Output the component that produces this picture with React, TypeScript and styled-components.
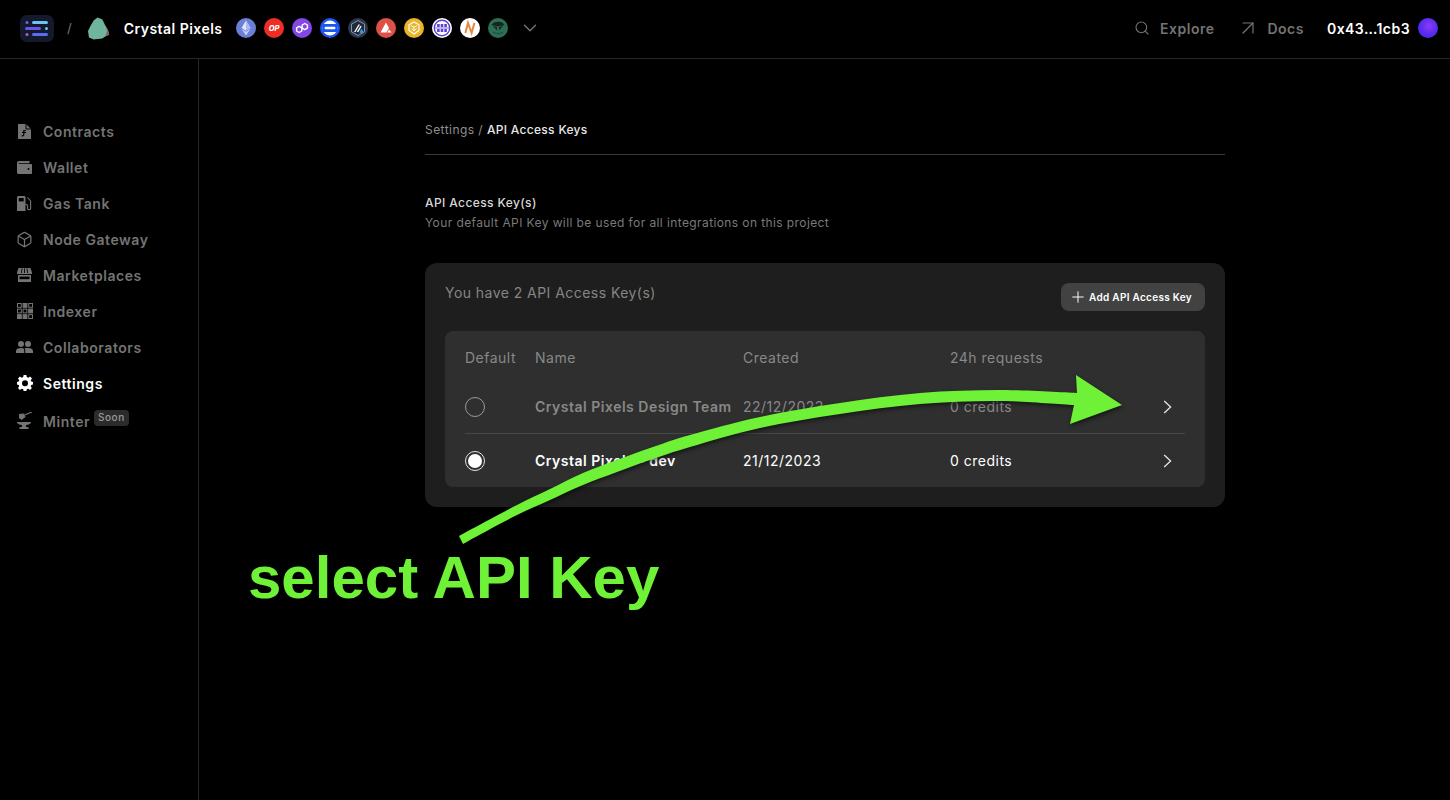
import React from "react";
import styled, { createGlobalStyle } from "styled-components";
import { ChevronDown, Search, ArrowUpRight, Plus, Box } from "lucide-react";

const GlobalStyle = createGlobalStyle`
  html, body {
    margin: 0;
    padding: 0;
    background: #000;
    font-family: Inter, "Liberation Sans", sans-serif;
    overflow: hidden;
  }
`;

const Page = styled.div`
  position: relative;
  width: 1450px;
  height: 800px;
  display: flex;
  flex-direction: column;
  background: #000;
  color: #fff;
`;

const Header = styled.header`
  height: 56px;
  flex: none;
  display: flex;
  align-items: center;
  padding: 0 12px 2px 20px;
  border-bottom: 1px solid #262626;
`;

const Logo = styled.div`
  width: 34px;
  height: 27px;
  border-radius: 7px;
  background: #141a2b;
  display: flex;
  align-items: center;
  justify-content: center;
`;

const Slash = styled.span`
  margin: 0 16px 0 13px;
  font-size: 13px;
  color: #777;
`;

const ProjectName = styled.span`
  margin: 0 13px 0 15px;
  font-size: 14px;
  font-weight: 600;
  letter-spacing: 0.47px;
`;

const Chains = styled.div`
  display: flex;
  gap: 8px;
  margin-right: 11px;
`;

const HeaderLink = styled.a<{ $gap: number }>`
  display: flex;
  align-items: center;
  gap: ${(p) => p.$gap}px;
  font-size: 14px;
  font-weight: 600;
  letter-spacing: 0.5px;
  color: #747474;
`;

const HeaderRight = styled.div`
  margin-left: auto;
  display: flex;
  align-items: center;
  gap: 22px;
`;

const Address = styled.div`
  display: flex;
  align-items: center;
  gap: 8px;
  margin-left: 1px;
  font-size: 14px;
  font-weight: 600;
  letter-spacing: 0.45px;
`;

const Avatar = styled.div`
  width: 20px;
  height: 20px;
  border-radius: 50%;
  background: radial-gradient(circle at 55% 40%, #8a3cf5 0%, #5b2bf0 50%, #3a2be0 100%);
`;

const Body = styled.div`
  flex: 1;
  display: flex;
  min-height: 0;
`;

const Sidebar = styled.nav`
  width: 199px;
  flex: none;
  box-sizing: border-box;
  padding: 54px 0 0 16px;
  border-right: 1px solid #262626;
`;

const NavItem = styled.a<{ $active?: boolean; $soon?: boolean }>`
  height: 36px;
  box-sizing: border-box;
  padding-top: ${(p) => (p.$soon ? "4px" : "0")};
  display: flex;
  align-items: center;
  gap: 10px;
  font-size: 14px;
  font-weight: 600;
  letter-spacing: 0.55px;
  color: ${(p) => (p.$active ? "#fff" : "#747474")};
`;

const NavIcon = styled.span<{ $lift?: boolean }>`
  width: 17px;
  height: 17px;
  flex: none;
  display: flex;
  align-items: center;
  justify-content: center;
  margin-top: ${(p) => (p.$lift ? "-2px" : "0")};
`;

const SoonBadge = styled.span`
  align-self: flex-start;
  margin: 5px 0 0 -6px;
  padding: 0 4px;
  height: 16px;
  line-height: 15px;
  border-radius: 4px;
  background: #2b2b2b;
  color: #999;
  font-size: 10px;
  font-weight: 500;
  letter-spacing: 0.5px;
`;

const Main = styled.main`
  flex: 1;
  display: flex;
  justify-content: center;
  padding-left: 1px;
`;

const Content = styled.div`
  width: 800px;
  padding-top: 63px;
`;

const Breadcrumb = styled.div`
  height: 32px;
  border-bottom: 1px solid #3a3a3a;
  font-size: 12px;
  letter-spacing: 0.45px;
  line-height: 16px;
  color: #8f8f8f;
  span {
    color: #e8e8e8;
    font-weight: 500;
    letter-spacing: 0.3px;
  }
`;

const SectionTitle = styled.h2`
  margin: 40px 0 0;
  font-size: 12px;
  line-height: 16px;
  font-weight: 500;
  letter-spacing: 0.4px;
  color: #d8d8d8;
`;

const SectionText = styled.p`
  margin: 4px 0 0;
  font-size: 12px;
  line-height: 16px;
  letter-spacing: 0.4px;
  color: #7a7a7a;
`;

const Card = styled.section`
  margin-top: 32px;
  padding: 20px;
  border-radius: 12px;
  background: #1e1e1e;
`;

const CardTop = styled.div`
  display: flex;
  justify-content: space-between;
  align-items: flex-start;
  height: 48px;
`;

const CardTitle = styled.div`
  font-size: 14px;
  line-height: 20px;
  letter-spacing: 0.45px;
  color: #858585;
`;

const AddButton = styled.button`
  width: 144px;
  height: 28px;
  padding: 0 0 0 8px;
  border: 0;
  border-radius: 8px;
  background: #424242;
  color: #fff;
  display: flex;
  align-items: center;
  gap: 2px;
  font-family: inherit;
  font-size: 10px;
  font-weight: 600;
  letter-spacing: 0.3px;
`;

const Panel = styled.div`
  border-radius: 8px;
  background: #2f2f2f;
  padding: 0 20px;
`;

const Row = styled.div<{ $head?: boolean; $dim?: boolean; $line?: boolean }>`
  display: grid;
  grid-template-columns: 70px 208px 207px 1fr 36px;
  align-items: center;
  height: ${(p) => (p.$head ? "49px" : p.$line ? "54px" : "53px")};
  box-sizing: border-box;
  padding-top: ${(p) => (p.$head ? "3px" : "0")};
  font-size: 14px;
  letter-spacing: 0.5px;
  color: ${(p) => (p.$head || p.$dim ? "#888" : "#fff")};
  border-bottom: ${(p) => (p.$line ? "1px solid #464646" : "0")};
`;

const NameCell = styled.div`
  font-weight: 600;
  white-space: nowrap;
`;

const Radio = styled.div<{ $on?: boolean }>`
  width: 20px;
  height: 20px;
  box-sizing: border-box;
  border-radius: 50%;
  border: 1px solid ${(p) => (p.$on ? "#e4e4e4" : "#9a9a9a")};
  padding: 2px;
  &::after {
    content: "";
    display: ${(p) => (p.$on ? "block" : "none")};
    width: 14px;
    height: 14px;
    border-radius: 50%;
    background: #fff;
  }
`;

const ChevronCell = styled.div`
  display: flex;
  justify-content: flex-end;
  padding-right: 13px;
`;

const Annotation = styled.svg`
  position: absolute;
  left: 0;
  top: 0;
  width: 1450px;
  height: 800px;
  pointer-events: none;
  filter: drop-shadow(1px 2px 2px rgba(0, 0, 0, 0.55));
`;

const AnnotationText = styled.div`
  position: absolute;
  left: 248px;
  top: 544px;
  font-family: "Liberation Sans", Arial, sans-serif;
  font-weight: 700;
  font-size: 60px;
  line-height: 68px;
  color: #6ef136;
  white-space: nowrap;
`;

const Chain = ({ bg, children }: { bg: string; children?: React.ReactNode }) => (
  <svg width="20" height="20" viewBox="0 0 20 20">
    <circle cx="10" cy="10" r="10" fill={bg} />
    {children}
  </svg>
);

const RowChevron = () => (
  <svg width="9" height="14" viewBox="0 0 9 14">
    <path d="M1.2 1 7.6 7 1.2 13" fill="none" stroke="#e6e6e6" strokeWidth="1.3" />
  </svg>
);

const chains = [
  <Chain bg="#6b7fd6" key="eth">
    <path d="M10 2.5 5.5 10 10 12.7 14.5 10Z" fill="#dfe5fb" />
    <path d="M5.5 11 10 17.5 14.5 11 10 13.7Z" fill="#c6d0f7" />
    <path d="M10 2.5V12.7L14.5 10Z" fill="#a9b8f3" />
  </Chain>,
  <Chain bg="#ee2d24" key="op">
    <text x="10" y="12.6" textAnchor="middle" fontSize="7.5" fontWeight="800" fontStyle="italic" fontFamily="Inter" fill="#fff">
      OP
    </text>
  </Chain>,
  <Chain bg="#8247e5" key="polygon">
    <path d="M7.2 8.4 9.8 9.9V13L7.2 14.5 4.6 13V9.9Z M12.8 5.5 15.4 7V10.1L12.8 11.6 10.2 10.1V7Z" fill="none" stroke="#fff" strokeWidth="1.4" strokeLinejoin="round" />
  </Chain>,
  <Chain bg="#1a57f0" key="base">
    <circle cx="10" cy="10" r="7.4" fill="#fff" />
    <rect x="2.6" y="6" width="14.8" height="8" fill="#1a57f0" />
    <rect x="4.6" y="8.7" width="10.8" height="2.6" rx="1" fill="#fff" />
  </Chain>,
  <Chain bg="#2c374b" key="arb">
    <path d="M10 2.5 16.5 6.2V13.8L10 17.5 3.5 13.8V6.2Z" fill="#1f2a3c" stroke="#9dadc0" strokeWidth=".8" />
    <path d="M6 14 10.5 6.5H12L7.5 14Z" fill="#fff" />
    <path d="M8.8 14 12.6 7.7 13.6 8.4 10.3 14Z" fill="#fff" />
    <path d="M11.5 14.5 13.4 10.8 15.5 13.6 13.6 15.2Z" fill="#28a0f0" />
  </Chain>,
  <Chain bg="#de5148" key="avax">
    <path d="M9.9 4.4 13 9.9 10.4 14.6H4.6Z" fill="#fff" />
    <path d="M13 11.6 15.6 14.6H11.2Z" fill="#fff" />
  </Chain>,
  <Chain bg="#e8b52c" key="bnb">
    <path d="M10 4 15 6.8V12.5L10 16 5 12.5V6.8Z" fill="none" stroke="#fff" strokeWidth="1.1" />
    <path d="M7 7.6 10 9.4 13 7.6M10 9.4V13M7.4 10.6 10 13 12.6 10.6" fill="none" stroke="#fff" strokeWidth="1" />
  </Chain>,
  <Chain bg="#fff" key="purple">
    <circle cx="10" cy="10" r="7.7" fill="#fff" stroke="#5d3fd3" strokeWidth="1.4" />
    {[5.1, 8.7, 12.3].flatMap((x) =>
      [6, 11].map((y) => <rect key={`${x}-${y}`} x={x} y={y} width="2.6" height="3" fill="#5d3fd3" />)
    )}
    <path d="M3 10H17" stroke="#5d3fd3" strokeWidth=".8" />
  </Chain>,
  <Chain bg="#fff" key="near">
    <path d="M5.4 15 8 5 11.6 15 14.4 5" fill="none" stroke="#e8873a" strokeWidth="2" />
  </Chain>,
  <Chain bg="#2d6f55" key="mantle">
    <path d="M3.5 7C5 2.5 15 2.5 16.5 7L10 8.6Z" fill="#16241f" />
    <path d="M4.5 7.6 9 9.2 9 12.6ZM15.5 7.6 11 9.2 11 12.6Z" fill="#16241f" />
    <path d="M5 14C7.5 16 12.5 16 15 14" fill="none" stroke="#1a4a38" strokeWidth="1" />
  </Chain>,
];

const navItems = [
  {
    label: "Contracts",
    icon: (
      <svg width="13" height="15" viewBox="0 0 13 15">
        <path d="M0 0H8L13 5V15H0Z" fill="#747474" />
        <path d="M8 0V5H13" fill="none" stroke="#000" strokeWidth="1" />
        <path d="M7.8 6.5H5.8V10.5C5.8 12 4.6 12 3.6 11.7M4 8.5H8" fill="none" stroke="#000" strokeWidth="1.1" />
      </svg>
    ),
  },
  {
    label: "Wallet",
    icon: (
      <svg width="15" height="13" viewBox="0 0 15 13">
        <path d="M2 0H12.5V2.2H2C1.2 2.2 1 3 2 3H14C14.6 3 15 3.4 15 4V12C15 12.6 14.6 13 14 13H1.5C.7 13 0 12.3 0 11.5V2C0 .9.9 0 2 0Z" fill="#747474" />
        <circle cx="11.5" cy="8" r="1" fill="#000" />
      </svg>
    ),
  },
  {
    label: "Gas Tank",
    icon: (
      <svg width="15" height="15" viewBox="0 0 15 15">
        <path d="M0 1.5C0 .7.7 0 1.5 0H7C7.8 0 8.5.7 8.5 1.5V15H0Z" fill="#747474" />
        <rect x="1.8" y="2" width="4.9" height="3.4" fill="#000" />
        <path d="M10.5 1.5 13.6 5V12.4C13.6 14 10.6 14 10.6 12.4V9.5C10.6 8.6 9.8 8.4 8.5 8.4" fill="none" stroke="#747474" strokeWidth="1.1" />
      </svg>
    ),
  },
  { label: "Node Gateway", icon: <Box size={17} color="#747474" strokeWidth={1.7} /> },
  {
    label: "Marketplaces",
    icon: (
      <svg width="15" height="14" viewBox="0 0 15 14">
        <path d="M1.5 0H13.5L15 4.5V6H0V4.5Z" fill="#747474" />
        <path d="M5 .5 4.4 5M10 .5 10.6 5M7.5 .5V5" stroke="#000" strokeWidth=".9" />
        <path d="M1 7H14V14H1Z" fill="#747474" />
        <rect x="0" y="6" width="15" height="1" fill="#000" />
        <rect x="2.5" y="8.6" width="10" height="2.6" fill="#000" />
      </svg>
    ),
  },
  {
    label: "Indexer",
    icon: (
      <svg width="16" height="16" viewBox="0 0 16 16">
        {[0, 1, 2].flatMap((r) =>
          [0, 1, 2].map((c) => {
            const filled = (r === 0 && c === 1) || (r === 1 && c === 2) || (r === 2 && c < 2);
            return (
              <rect
                key={`${r}-${c}`}
                x={c * 5.6 + 0.5}
                y={r * 5.6 + 0.5}
                width="3.8"
                height="3.8"
                fill={filled ? "#747474" : "none"}
                stroke="#747474"
                strokeWidth="1"
              />
            );
          })
        )}
      </svg>
    ),
  },
  {
    label: "Collaborators",
    icon: (
      <svg width="17" height="12" viewBox="0 0 17 12">
        <circle cx="5" cy="3" r="3" fill="#747474" />
        <circle cx="12" cy="3" r="3" fill="#747474" />
        <path d="M0 12V10C0 8 2 7 5 7S8.2 8 8.2 10V12ZM9.2 12V9.5C9.2 8.5 9 7.8 8.6 7.3 9.4 7 10.6 7 12 7 15 7 17 8 17 10V12Z" fill="#747474" />
      </svg>
    ),
  },
  {
    label: "Settings",
    active: true,
    icon: (
      <svg width="16" height="16" viewBox="0 0 16 16">
        <path
          d="M6.6 0H9.4L9.8 2.1 11.3 2.7 13.1 1.5 15 3.4 13.7 5.2 14.3 6.6 16 7V9.6L14.3 10 13.7 11.4 14.9 13.1 13 15 11.2 13.8 9.8 14.3 9.4 16H6.6L6.2 14.3 4.7 13.8 2.9 15 1 13.1 2.2 11.3 1.7 10 0 9.6V7L1.7 6.6 2.3 5.2 1 3.4 2.9 1.5 4.7 2.7 6.2 2.1Z"
          fill="#fff"
        />
        <circle cx="8" cy="8.2" r="3" fill="#000" />
      </svg>
    ),
  },
  {
    label: "Minter",
    soon: true,
    icon: (
      <svg width="17" height="17" viewBox="0 0 17 17">
        <path d="M3 2 8 1.5 9.5 5 5.5 8 3 6Z" fill="#747474" />
        <path d="M8.5 3 16 0" stroke="#747474" strokeWidth="1.2" />
        <path d="M1 10H15C15 12 12 13 10 13V15H12.5V17H3.5V15H6V13C4 13 1 12 1 10Z" fill="#747474" />
      </svg>
    ),
  },
];

const keys = [
  { name: "Crystal Pixels Design Team", created: "22/12/2023", dim: true, line: true },
  { name: "Crystal Pixels - dev", created: "21/12/2023" },
];

// outline of the hand drawn arrow, traced point by point
const shaft: [number, number][] = [
  [459, 536], [483, 523], [517, 505], [550, 489], [583, 473], [617, 460], [650, 448], [690, 435], [760, 417],
  [840, 403], [920, 393], [1000, 390], [1077, 393],
];
const shaftBack: [number, number][] = [
  [1074, 405], [1000, 401], [920, 404], [840, 414], [760, 428], [690, 447], [650, 460], [617, 472], [583, 485],
  [550, 500], [517, 515], [483, 533], [463, 544],
];

const smooth = (pts: [number, number][]) => {
  let d = "";
  for (let i = 0; i < pts.length - 1; i++) {
    const p0 = pts[Math.max(i - 1, 0)];
    const p1 = pts[i];
    const p2 = pts[i + 1];
    const p3 = pts[Math.min(i + 2, pts.length - 1)];
    const c1 = [p1[0] + (p2[0] - p0[0]) / 6, p1[1] + (p2[1] - p0[1]) / 6];
    const c2 = [p2[0] - (p3[0] - p1[0]) / 6, p2[1] - (p3[1] - p1[1]) / 6];
    d += `C${c1[0]} ${c1[1]} ${c2[0]} ${c2[1]} ${p2[0]} ${p2[1]}`;
  }
  return d;
};

const arrowPath = `M459 536${smooth(shaft)}L1076 375L1122 405L1070 424L1074 405${smooth(shaftBack)}Z`;

export default function App() {
  return (
    <Page>
      <GlobalStyle />
      <Header>
        <Logo>
          <svg width="24" height="17" viewBox="0 0 24 17">
            <circle cx="2" cy="2.5" r="1.5" fill="#5a6cf5" />
            <rect x="7" y="1" width="16" height="3" rx="1.5" fill="#6cc5f0" />
            <rect x="0" y="7" width="16" height="3" rx="1.5" fill="#6a55e8" />
            <circle cx="21.5" cy="8.5" r="1.5" fill="#6cc5f0" />
            <circle cx="2" cy="14.5" r="1.5" fill="#b05ae0" />
            <rect x="7" y="13" width="16" height="3" rx="1.5" fill="#5a6cf5" />
          </svg>
        </Logo>
        <Slash>/</Slash>
        <svg width="21" height="23" viewBox="0 0 22 23">
          <path d="M10 0 15 2 18 8 21 13 22 18 18 20 15 22 6 23 1 21 0 14 3 8 6 3Z" fill="#6fb49d" />
          <path d="M18 8 21 13 22 18 18 20 20 14Z" fill="#8a5f72" />
        </svg>
        <ProjectName>Crystal Pixels</ProjectName>
        <Chains>{chains}</Chains>
        <ChevronDown size={22} color="#747474" strokeWidth={1.5} />
        <HeaderRight>
          <HeaderLink $gap={10}>
            <Search size={16} color="#747474" strokeWidth={1.6} />
            Explore
          </HeaderLink>
          <HeaderLink $gap={7}>
            <ArrowUpRight size={24} color="#747474" strokeWidth={1.2} />
            Docs
          </HeaderLink>
          <Address>
            0x43…1cb3
            <Avatar />
          </Address>
        </HeaderRight>
      </Header>
      <Body>
        <Sidebar>
          {navItems.map((item) => (
            <NavItem key={item.label} $active={item.active} $soon={item.soon}>
              <NavIcon $lift={item.soon}>{item.icon}</NavIcon>
              {item.label}
              {item.soon && <SoonBadge>Soon</SoonBadge>}
            </NavItem>
          ))}
        </Sidebar>
        <Main>
          <Content>
            <Breadcrumb>
              Settings / <span>API Access Keys</span>
            </Breadcrumb>
            <SectionTitle>API Access Key(s)</SectionTitle>
            <SectionText>Your default API Key will be used for all integrations on this project</SectionText>
            <Card>
              <CardTop>
                <CardTitle>You have 2 API Access Key(s)</CardTitle>
                <AddButton>
                  <Plus size={18} strokeWidth={1.3} />
                  Add API Access Key
                </AddButton>
              </CardTop>
              <Panel>
                <Row $head>
                  <div>Default</div>
                  <div>Name</div>
                  <div>Created</div>
                  <div>24h requests</div>
                  <div />
                </Row>
                {keys.map((key) => (
                  <Row key={key.name} $dim={key.dim} $line={key.line}>
                    <Radio $on={!key.dim} />
                    <NameCell>{key.name}</NameCell>
                    <div>{key.created}</div>
                    <div>0 credits</div>
                    <ChevronCell>
                      <RowChevron />
                    </ChevronCell>
                  </Row>
                ))}
              </Panel>
            </Card>
          </Content>
        </Main>
      </Body>
      <Annotation viewBox="0 0 1450 800">
        <path d={arrowPath} fill="#6ef136" />
      </Annotation>
      <AnnotationText>select API Key</AnnotationText>
    </Page>
  );
}
